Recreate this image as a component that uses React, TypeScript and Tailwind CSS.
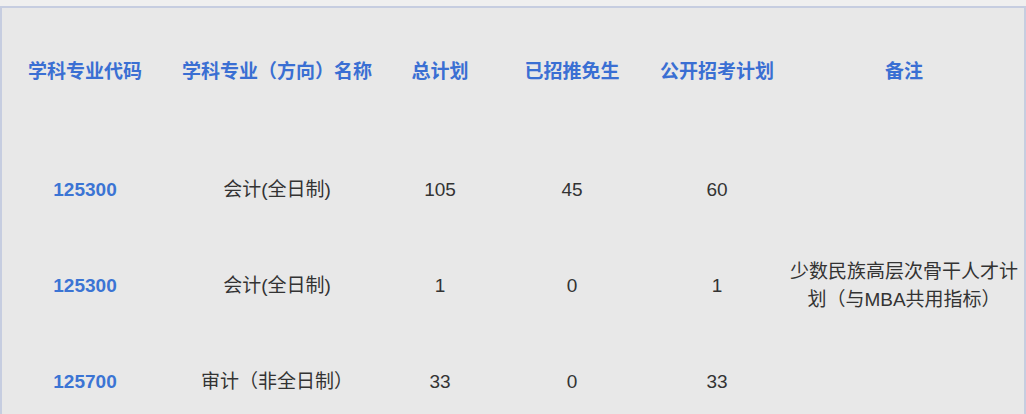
const rows = [
  { code: "125300", name: "会计(全日制)", total: "105", exempt: "45", open: "60", note: "" },
  { code: "125300", name: "会计(全日制)", total: "1", exempt: "0", open: "1", note: "少数民族高层次骨干人才计划（与MBA共用指标）" },
  { code: "125700", name: "审计（非全日制）", total: "33", exempt: "0", open: "33", note: "" },
];

const cols = ["w-[166px]", "w-[218px]", "w-[108px]", "w-[156px]", "w-[134px]", "flex-1"];
const heads = ["学科专业代码", "学科专业（方向）名称", "总计划", "已招推免生", "公开招考计划", "备注"];

export default function App() {
  return (
    <div className="w-[1026px] h-[414px] overflow-hidden bg-[#efefef] pt-[6px] font-['Liberation_Sans','Noto_Sans_CJK_SC',sans-serif]">
      <div className="h-full border-t-2 border-l-2 border-r-2 border-[#c6cde0] bg-[#e8e8e8]">
        <div className="flex h-[128px] items-center text-[19px] font-bold text-[#3a6fd3]">
          {heads.map((h, i) => (
            <div key={h} className={`${cols[i]} text-center`}>{h}</div>
          ))}
        </div>
        <div className="mt-[6px]">
          {rows.map((r, idx) => (
            <div key={idx} className="flex h-[96px] items-center text-[19px] text-[#333333]">
              <div className={`${cols[0]} text-center font-bold text-[#3b74d4]`}>{r.code}</div>
              <div className={`${cols[1]} text-center`}>{r.name}</div>
              <div className={`${cols[2]} text-center`}>{r.total}</div>
              <div className={`${cols[3]} text-center`}>{r.exempt}</div>
              <div className={`${cols[4]} text-center`}>{r.open}</div>
              <div className={`${cols[5]} px-[4px] text-center leading-[28px]`}>{r.note}</div>
            </div>
          ))}
        </div>
      </div>
    </div>
  );
}
